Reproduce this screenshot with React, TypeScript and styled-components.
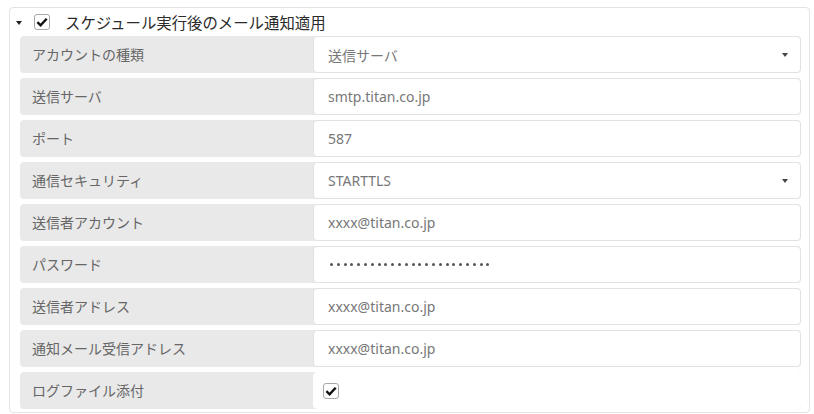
import React from 'react';
import styled, { createGlobalStyle } from 'styled-components';

const GlobalStyle = createGlobalStyle`
  html, body {
    margin: 0;
    padding: 0;
    background: #ffffff;
  }
  body {
    font-family: "Noto Sans", "Noto Sans CJK JP", sans-serif;
  }
`;

const Page = styled.div`
  width: 814px;
  height: 414px;
  padding: 7px 4px 0 9px;
  box-sizing: border-box;
`;

const Panel = styled.fieldset`
  margin: 0;
  padding: 0 8px 3px 10px;
  border: 1px solid #e3e3e3;
  border-radius: 4px;
  min-width: 0;
`;

const Header = styled.div`
  display: flex;
  align-items: center;
  height: 28px;
  margin-left: -4px;
`;

const Caret = styled.span`
  width: 0;
  height: 0;
  border-left: 3.5px solid transparent;
  border-right: 3.5px solid transparent;
  border-top: 4px solid #222;
  margin-right: 12px;
  margin-top: 1px;
`;

const Check = styled.span`
  display: inline-flex;
  align-items: center;
  justify-content: center;
  width: 16px;
  height: 16px;
  border: 1px solid #a8a8a8;
  border-radius: 3px;
  background: #fff;
  box-sizing: border-box;
  flex: none;

  > svg {
    width: 12px;
    height: 12px;
  }
`;

const Title = styled.span`
  margin-left: 15px;
  font-size: 15.4px;
  color: #2b2b2b;
  font-family: "Noto Sans CJK JP", sans-serif;
`;

const Rows = styled.div`
  display: flex;
  flex-direction: column;
  gap: 5px;
`;

const Row = styled.div`
  display: flex;
  height: 37px;
  background: #e9e9e9;
  border-radius: 4px;
`;

const Label = styled.div`
  width: 293px;
  flex: none;
  display: flex;
  align-items: center;
  padding: 0 0 1px 12px;
  box-sizing: border-box;
  font-size: 14px;
  color: #666;
  font-family: "Noto Sans CJK JP", sans-serif;
`;

const Value = styled.div<{ bare?: boolean }>`
  flex: 1;
  display: flex;
  align-items: center;
  padding: 0 12px 0 ${p => (p.bare ? '9px' : '14px')};
  background: #fff;
  border: 1px solid ${p => (p.bare ? '#fff' : '#e2e2e2')};
  border-radius: 4px;
  font-size: 14px;
  color: #777;
  font-family: "Noto Sans", "Noto Sans CJK JP", sans-serif;
  box-sizing: border-box;
`;

const Text = styled.span`
  flex: 1;
`;

const Arrow = styled.span`
  width: 0;
  height: 0;
  border-left: 3.5px solid transparent;
  border-right: 3.5px solid transparent;
  border-top: 4px solid #444;
`;

const Dots = styled.span`
  display: flex;
  gap: 3.8px;
  margin-left: 2px;
  > i {
    width: 3px;
    height: 3px;
    border-radius: 50%;
    background: #555;
  }
`;

const Tick = () => (
  <svg viewBox="0 0 12 12">
    <path d="M1.4 6.2 L4.6 9.3 L10.7 2.7" fill="none" stroke="#111" strokeWidth="2.4" strokeLinejoin="miter" />
  </svg>
);

type Field = { label: string; value?: string; select?: boolean; password?: boolean; check?: boolean };

const fields: Field[] = [
  { label: 'アカウントの種類', value: '送信サーバ', select: true },
  { label: '送信サーバ', value: 'smtp.titan.co.jp' },
  { label: 'ポート', value: '587' },
  { label: '通信セキュリティ', value: 'STARTTLS', select: true },
  { label: '送信者アカウント', value: 'xxxx@titan.co.jp' },
  { label: 'パスワード', password: true },
  { label: '送信者アドレス', value: 'xxxx@titan.co.jp' },
  { label: '通知メール受信アドレス', value: 'xxxx@titan.co.jp' },
  { label: 'ログファイル添付', check: true },
];

export default function App() {
  return (
    <Page>
      <GlobalStyle />
      <Panel>
        <Header>
          <Caret />
          <Check><Tick /></Check>
          <Title>スケジュール実行後のメール通知適用</Title>
        </Header>
        <Rows>
          {fields.map(f => (
            <Row key={f.label}>
              <Label>{f.label}</Label>
              <Value bare={f.check}>
                {f.check ? (
                  <Check><Tick /></Check>
                ) : f.password ? (
                  <Dots>
                    {Array.from({ length: 24 }).map((_, i) => <i key={i} />)}
                  </Dots>
                ) : (
                  <Text>{f.value}</Text>
                )}
                {f.select && <Arrow />}
              </Value>
            </Row>
          ))}
        </Rows>
      </Panel>
    </Page>
  );
}
